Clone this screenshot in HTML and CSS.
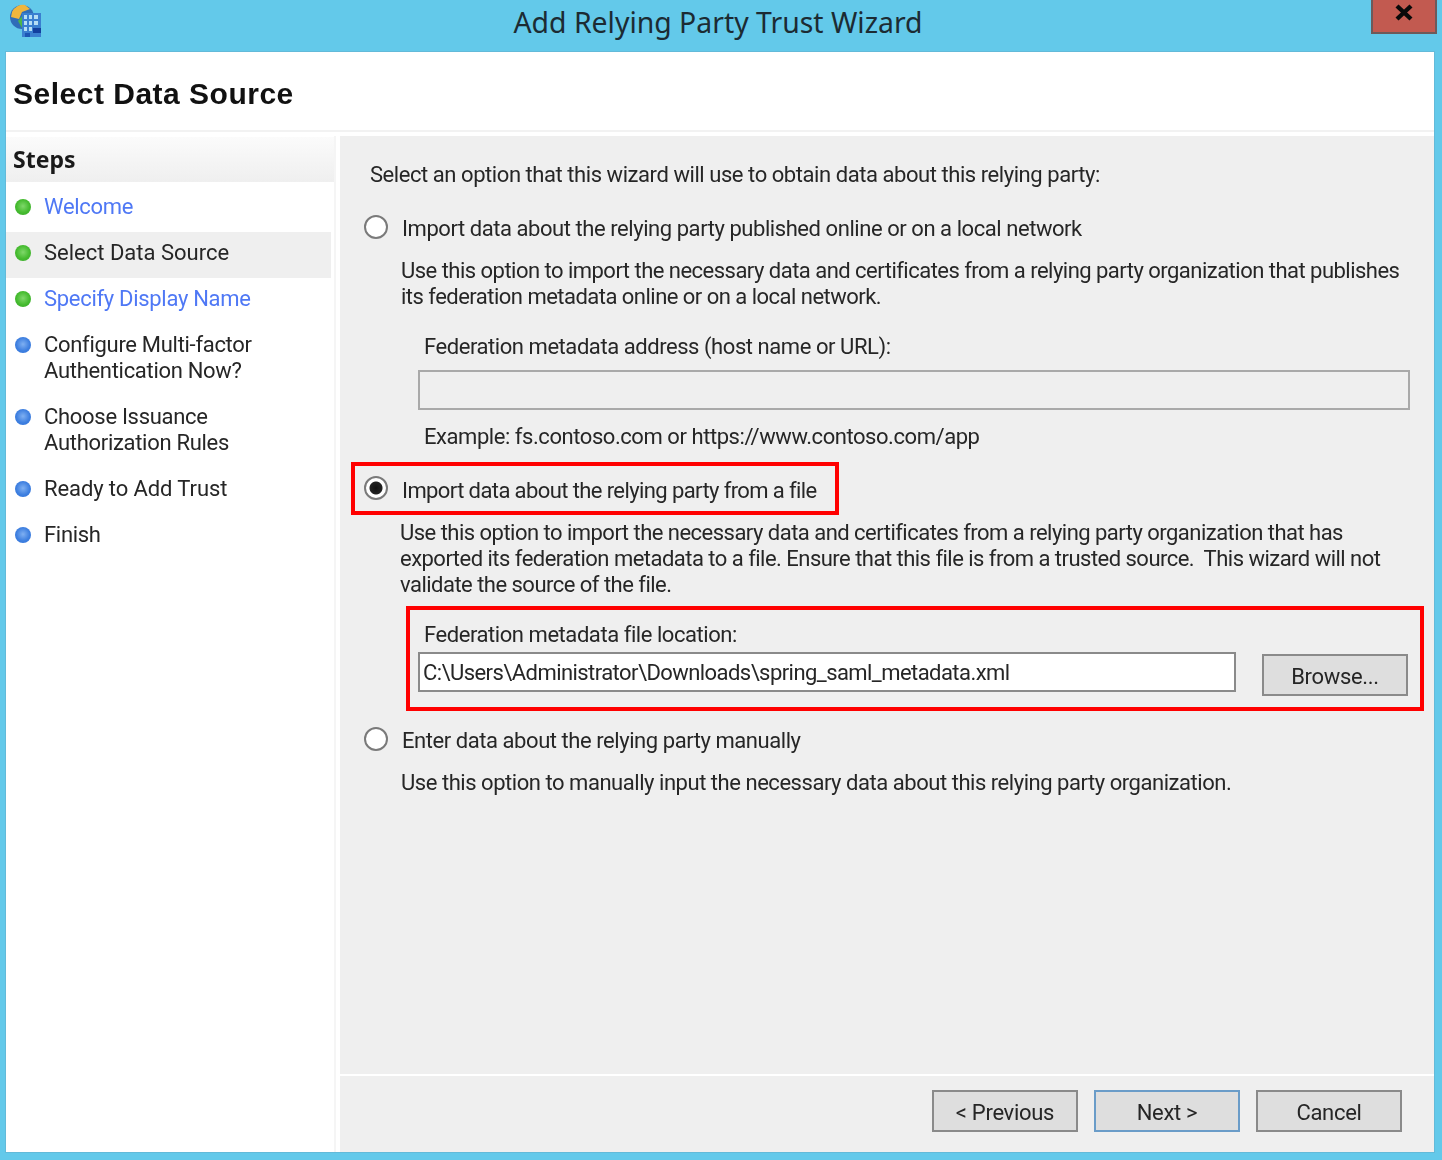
FILE: index.html
```html
<!DOCTYPE html>
<html lang="en">
<head>
<meta charset="utf-8">
<title>Add Relying Party Trust Wizard</title>
<link rel="stylesheet" href="styles.css">
</head>
<body>
<div class="window">
  <header class="titlebar">
    <svg class="app-icon" width="34" height="34" viewBox="0 0 34 34">
      <circle cx="13" cy="13" r="12" fill="#2f6db8"/>
      <path d="M3 8a12 12 0 0 1 13-7l5 4-8 3-3 7-8-2z" fill="#efb63e"/>
      <path d="M9 17l5-6 5 1v9l-6 3z" fill="#4db54a"/>
      <rect x="13" y="9" width="19" height="24" fill="#3a7fd0"/>
      <path d="M15 11h3v4h-3zM20 11h3v4h-3zM25 11h4v4h-4zM15 17h3v4h-3zM20 17h3v4h-3zM25 17h4v4h-4zM15 23h3v4h-3zM20 23h3v4h-3z" fill="#b5def5"/>
      <rect x="24" y="24" width="8" height="5" fill="#123f9e"/>
      <rect x="16" y="29" width="5" height="4" fill="#1c56b4"/>
    </svg>
    <div class="title">Add Relying Party Trust Wizard</div>
    <div class="close">
      <svg width="20" height="17" viewBox="0 0 20 17"><path d="M3 2l14 13M17 2L3 15" fill="none" stroke="#0a0a0a" stroke-width="4.4"/></svg>
    </div>
  </header>
  <div class="client">
    <div class="page-head"><h1>Select Data Source</h1></div>
    <div class="columns">
      <nav class="sidebar">
        <div class="steps-head">Steps</div>
        <ul class="steps">
          <li class="step done link"><i class="dot green"></i><span>Welcome</span></li>
          <li class="step done current"><i class="dot green"></i><span>Select Data Source</span></li>
          <li class="step done link"><i class="dot green"></i><span>Specify Display Name</span></li>
          <li class="step"><i class="dot blue"></i><span>Configure Multi-factor<br>Authentication Now?</span></li>
          <li class="step"><i class="dot blue"></i><span>Choose Issuance<br>Authorization Rules</span></li>
          <li class="step"><i class="dot blue"></i><span>Ready to Add Trust</span></li>
          <li class="step"><i class="dot blue"></i><span>Finish</span></li>
        </ul>
      </nav>
      <main class="main">
        <div class="content">
          <p class="intro">Select an option that this wizard will use to obtain data about this relying party:</p>

          <div class="option first"><i class="radio"></i><span>Import data about the relying party published online or on a local network</span></div>
          <p class="desc">Use this option to import the necessary data and certificates from a relying party organization that publishes<br>its federation metadata online or on a local network.</p>
          <p class="field-label online">Federation metadata address (host name or URL):</p>
          <div class="input disabled"></div>
          <p class="field-label example">Example: fs.contoso.com or https://www.contoso.com/app</p>

          <div class="option boxed"><i class="radio on"></i><span>Import data about the relying party from a file</span></div>
          <p class="desc second">Use this option to import the necessary data and certificates from a relying party organization that has<br>exported its federation metadata to a file. Ensure that this file is from a trusted source.&nbsp; This wizard will not<br>validate the source of the file.</p>
          <div class="file-box">
            <p class="field-label">Federation metadata file location:</p>
            <div class="file-row">
              <div class="input path">C:\Users\Administrator\Downloads\spring_saml_metadata.xml</div>
              <button class="btn browse">Browse...</button>
            </div>
          </div>

          <div class="option third"><i class="radio"></i><span>Enter data about the relying party manually</span></div>
          <p class="desc last">Use this option to manually input the necessary data about this relying party organization.</p>
        </div>
        <footer class="footer">
          <button class="btn">&lt; Previous</button>
          <button class="btn default">Next &gt;</button>
          <button class="btn">Cancel</button>
        </footer>
      </main>
    </div>
  </div>
</div>
</body>
</html>
```
FILE: styles.css
```css
* { box-sizing: border-box; }
html, body { margin: 0; padding: 0; }
body {
  width: 1442px;
  height: 1160px;
  overflow: hidden;
  background: #63c9ea;
  font-family: Roboto, sans-serif;
  font-size: 22px;
  color: #262626;
}
p { margin: 0; }
.window {
  height: 1160px;
  display: flex;
  flex-direction: column;
  filter: blur(0.45px);
}
.titlebar {
  height: 52px;
  flex: none;
  display: flex;
  align-items: flex-start;
  background: #63c9ea;
}
.app-icon { margin: 4px 0 0 9px; flex: none; }
.title {
  flex: 1;
  text-align: center;
  font-family: "Noto Sans", sans-serif;
  font-size: 28.4px;
  line-height: 44px;
  color: #1c2b33;
  padding-left: 22px;
}
.close {
  width: 66px;
  height: 34px;
  margin-right: 5px;
  flex: none;
  display: flex;
  justify-content: center;
  padding-top: 4px;
  background: #c25a50;
  border: 1px solid #6d5a5a;
  border-width: 0 2px 2px 2px;
}
.client {
  flex: 1;
  margin: 0 8px 8px 6px;
  background: #fff;
  display: flex;
  flex-direction: column;
  min-height: 0;
  box-shadow: 0 0 0 1px rgba(100, 130, 150, 0.2);
}
.page-head {
  height: 80px;
  flex: none;
  border-bottom: 2px solid #f2f2f2;
  padding: 22px 0 0 7px;
}
h1 {
  margin: 0;
  font: bold 30px/40px "Liberation Sans", sans-serif;
  letter-spacing: 0.5px;
  color: #111;
}
.columns {
  flex: 1;
  display: flex;
  padding-top: 4px;
  min-height: 0;
}
.sidebar {
  width: 330px;
  flex: none;
  padding-top: 1px;
  background: #fff;
  border-right: 2px solid #f5f5f5;
}
.steps-head {
  height: 45px;
  padding: 6px 0 0 7px;
  font: bold 23px/33px "Noto Sans", sans-serif;
  color: #1a1a1a;
  background: linear-gradient(#fbfbfb, #efefef);
}
.steps { list-style: none; margin: 0; padding: 0; letter-spacing: -0.3px; }
.step {
  width: 325px;
  display: flex;
  align-items: flex-start;
  padding: 12px 0 6px 9px;
  line-height: 26px;
}
.step.current { background: #efefef; margin-top: 4px; margin-bottom: -4px; padding-top: 8px; letter-spacing: 0; }
.step.link { color: #4f78f5; }
.step > span { margin-left: 13px; white-space: nowrap; }
.step:nth-child(1) { height: 46px; }
.step:nth-child(2) { height: 46px; }
.step:nth-child(3) { height: 46px; }
.step:nth-child(4), .step:nth-child(5) { height: 72px; }
.step:nth-child(6), .step:nth-child(7) { height: 46px; }
.step:nth-child(6) { letter-spacing: -0.1px; }
.dot {
  width: 16px;
  height: 16px;
  margin-top: 5px;
  border-radius: 50%;
  flex: none;
}
.dot.green { background: radial-gradient(circle at 50% 45%, #7fd86a 0, #45bb2f 55%, #36a52a 100%); }
.dot.blue { background: radial-gradient(circle at 50% 45%, #7fb0f2 0, #3f80e0 55%, #2c6fd8 100%); }
.main {
  flex: 1;
  margin-left: 4px;
  display: flex;
  flex-direction: column;
  background: #efefef;
  min-width: 0;
}
.content {
  flex: 1;
  border-bottom: 2px solid #fff;
  white-space: nowrap;
  padding-top: 26px;
  letter-spacing: -0.44px;
}
.intro { margin-left: 30px; line-height: 26px; }
.option { display: flex; align-items: center; height: 26px; margin-left: 24px; }
.option > span { margin: 2px 0 0 14px; line-height: 26px; }
.option.first { margin-top: 27px; }
.radio {
  width: 24px;
  height: 24px;
  margin-bottom: 2px;
  flex: none;
  border-radius: 50%;
  background: #fff;
  border: 2px solid #7a7a7a;
}
.radio.on {
  background: radial-gradient(circle, #111 0, #222 6px, #fff 7px);
}
.desc { margin: 17px 0 0 61px; line-height: 26px; letter-spacing: -0.52px; }
.desc.last { letter-spacing: -0.46px; }
.field-label { margin-left: 84px; line-height: 26px; }
.field-label.online { margin-top: 24px; }
.field-label.example { margin-top: 14px; }
.input {
  height: 40px;
  border: 2px solid #a9a9a9;
  line-height: 38px;
  padding-left: 3px;
}
.input.disabled { width: 992px; margin: 10px 0 0 78px; background: #efefef; }
.option.boxed {
  width: 488px;
  height: 53px;
  margin: 12px 0 0 11px;
  padding-left: 13px;
  border: 4px solid #f00;
  letter-spacing: -0.6px;
}
.option.boxed .radio { margin-left: -4px; }
.option.boxed > span { margin-top: 4px; }
.desc.second { margin: 5px 0 0 60px; }
.file-box {
  width: 1018px;
  height: 105px;
  margin: 8px 0 0 66px;
  padding-top: 12px;
  border: 4px solid #f00;
}
.file-box .field-label { margin-left: 14px; }
.file-row { display: flex; align-items: flex-start; margin-top: 4px; margin-left: 8px; }
.input.path { width: 818px; background: #fff; border-color: #8a8a8a; letter-spacing: -0.56px; }
.btn {
  width: 146px;
  height: 42px;
  flex: none;
  background: #dedede;
  border: 2px solid #8a8a8a;
  font: inherit;
  color: inherit;
  padding: 3px 0 0;
  line-height: 34px;
  letter-spacing: -0.3px;
}
.btn.browse { margin: 2px 0 0 26px; }
.btn.default { border-color: #6a9cc8; }
.option.third { margin-top: 16px; }
.footer {
  height: 76px;
  flex: none;
  display: flex;
  justify-content: flex-end;
  gap: 16px;
  padding: 14px 32px 0 0;
}
```
